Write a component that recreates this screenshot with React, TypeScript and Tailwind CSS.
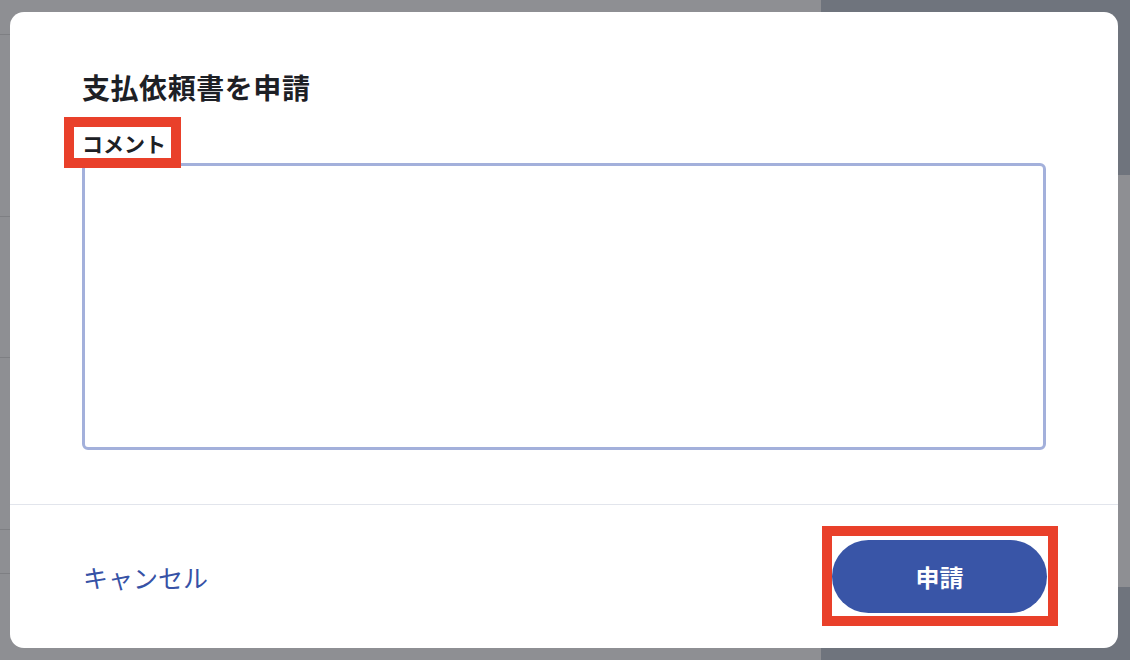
import React from 'react';

const font = { fontFamily: '"Noto Sans CJK JP", "Noto Sans", sans-serif' };

const Backdrop = () => {
   return (
      <div className="flex h-[660px] w-[1130px]">
         <div className="flex w-[821px] flex-col bg-[#8e8f93]">
            <div className="h-[35px] border-b border-[#7e7f83]" />
            <div className="h-[182px] border-b border-[#7e7f83]" />
            <div className="h-[141px] border-b border-[#7e7f83]" />
            <div className="h-[172px] border-b border-[#7e7f83]" />
            <div className="h-[44px] border-b border-[#7e7f83]" />
            <div className="flex-1" />
         </div>
         <div className="flex flex-1 flex-col bg-[#6f747d]">
            <div className="h-[175px]" />
            <div className="h-[412px] bg-[#8e8f93]" />
            <div className="flex-1" />
         </div>
      </div>
   );
};

const Highlight = ({ className }: { className: string }) => (
   <span
      className={`pointer-events-none absolute border-[10px] border-[#e9402a] ${className}`}
   />
);

export default function App() {
   return (
      <div className="relative h-[660px] w-[1130px] overflow-hidden" style={font}>
         <Backdrop />
         <div className="absolute inset-0 flex pb-[12px] pl-[10px] pr-[12px] pt-[12px]">
            <div className="flex flex-1 flex-col rounded-[14px] bg-white">
               <div className="px-[72px] pb-[54px] pt-[57px]">
                  <h2 className="text-[28px] font-bold leading-[36px] tracking-[0.02em] text-[#1d2025]">
                     支払依頼書を申請
                  </h2>
                  <div className="mt-[24px]">
                     <span className="relative inline-block text-[21px] font-bold leading-[28px] text-[#1d2025]">
                        コメント
                        <Highlight className="-bottom-[11px] -left-[18px] -right-[15px] -top-[12px]" />
                     </span>
                  </div>
                  <textarea className="mt-[6px] block h-[287px] w-full resize-none rounded-[6px] border-[3px] border-[#a3b0db] bg-white outline-none" />
               </div>
               <div className="flex flex-1 items-center justify-between border-t border-[#e2e5ec] pl-[73px] pr-[71px]">
                  <button className="text-[25px] leading-[32px] text-[#3652a6]">
                     キャンセル
                  </button>
                  <div className="relative">
                     <button className="flex h-[73px] w-[215px] items-center justify-center rounded-full bg-[#3955a7] text-[24px] font-bold text-white">
                        申請
                     </button>
                     <Highlight className="-bottom-[13px] -left-[10px] -right-[11px] -top-[14px]" />
                  </div>
               </div>
            </div>
         </div>
      </div>
   );
}
